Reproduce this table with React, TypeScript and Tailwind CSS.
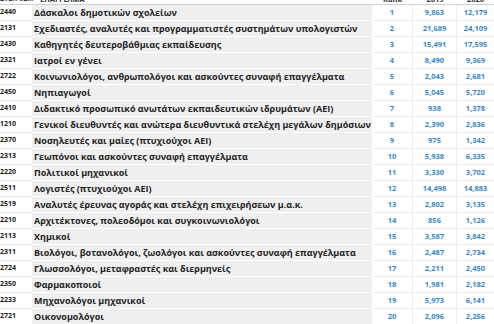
const rows: [string, string, number, string, string][] = [
  ["2440", "Δάσκαλοι δημοτικών σχολείων", 1, "9,863", "12,179"],
  ["2131", "Σχεδιαστές, αναλυτές και προγραμματιστές συστημάτων υπολογιστών", 2, "21,689", "24,109"],
  ["2430", "Καθηγητές δευτεροβάθμιας εκπαίδευσης", 3, "15,491", "17,595"],
  ["2321", "Ιατροί εν γένει", 4, "8,490", "9,369"],
  ["2722", "Κοινωνιολόγοι, ανθρωπολόγοι και ασκούντες συναφή επαγγέλματα", 5, "2,043", "2,681"],
  ["2450", "Νηπιαγωγοί", 6, "5,045", "5,720"],
  ["2410", "Διδακτικό προσωπικό ανωτάτων εκπαιδευτικών ιδρυμάτων (ΑΕΙ)", 7, "938", "1,378"],
  ["1210", "Γενικοί διευθυντές και ανώτερα διευθυντικά στελέχη μεγάλων δημόσιων και", 8, "2,390", "2,836"],
  ["2370", "Νοσηλευτές και μαίες (πτυχιούχοι ΑΕΙ)", 9, "975", "1,342"],
  ["2313", "Γεωπόνοι και ασκούντες συναφή επαγγέλματα", 10, "5,938", "6,335"],
  ["2220", "Πολιτικοί μηχανικοί", 11, "3,330", "3,702"],
  ["2511", "Λογιστές (πτυχιούχοι ΑΕΙ)", 12, "14,498", "14,883"],
  ["2519", "Αναλυτές έρευνας αγοράς και στελέχη επιχειρήσεων μ.α.κ.", 13, "2,802", "3,135"],
  ["2210", "Αρχιτέκτονες, πολεοδόμοι και συγκοινωνιολόγοι", 14, "856", "1,126"],
  ["2113", "Χημικοί", 15, "3,587", "3,842"],
  ["2311", "Βιολόγοι, βοτανολόγοι, ζωολόγοι και ασκούντες συναφή επαγγέλματα", 16, "2,487", "2,734"],
  ["2724", "Γλωσσολόγοι, μεταφραστές και διερμηνείς", 17, "2,211", "2,450"],
  ["2350", "Φαρμακοποιοί", 18, "1,981", "2,182"],
  ["2233", "Μηχανολόγοι μηχανικοί", 19, "5,973", "6,141"],
  ["2721", "Οικονομολόγοι", 20, "2,096", "2,256"],
];

const cols = "grid grid-cols-[32px_340px_41px_44px_37px]";

export default function App() {
  return (
    <div className="w-[494px] h-[324px] overflow-hidden bg-white font-['Open_Sans',sans-serif]">
      {/* header, scrolled mostly out of view */}
      <div className={`${cols} -mt-[7px] h-[12px] items-end border-b border-[#d0d0d0] text-[7.5px] font-bold leading-[10px] text-[#333]`}>
        <div className="whitespace-nowrap text-[7px]">ΣΤΕΠ 92...</div>
        <div className="pl-[8px]">ΕΠΑΓΓΕΛΜΑ</div>
        <div className="text-center">Rank</div>
        <div className="text-center">2019</div>
        <div className="text-center">2020</div>
      </div>
      {rows.map(([code, name, rank, a, b]) => (
        <div key={code} className={`${cols} h-[16px] items-stretch`}>
          <div className="flex items-center border-b border-[#e8e8e8] text-[7px] font-bold text-[#222]">{code}</div>
          <div className="flex items-center overflow-hidden whitespace-nowrap border-b border-white bg-[#efefef] pl-[2px] text-[9px] font-bold text-[#222]">
            {name}
          </div>
          <div className="flex items-center justify-center border-b border-r border-[#ececec] text-[7.5px] font-bold text-[#3a87c8]">{rank}</div>
          <div className="flex items-center justify-center border-b border-r border-[#ececec] text-[7.5px] font-bold text-[#3a87c8]">{a}</div>
          <div className="flex items-center justify-center border-b border-[#ececec] text-[7.5px] font-bold text-[#3a87c8]">{b}</div>
        </div>
      ))}
    </div>
  );
}
